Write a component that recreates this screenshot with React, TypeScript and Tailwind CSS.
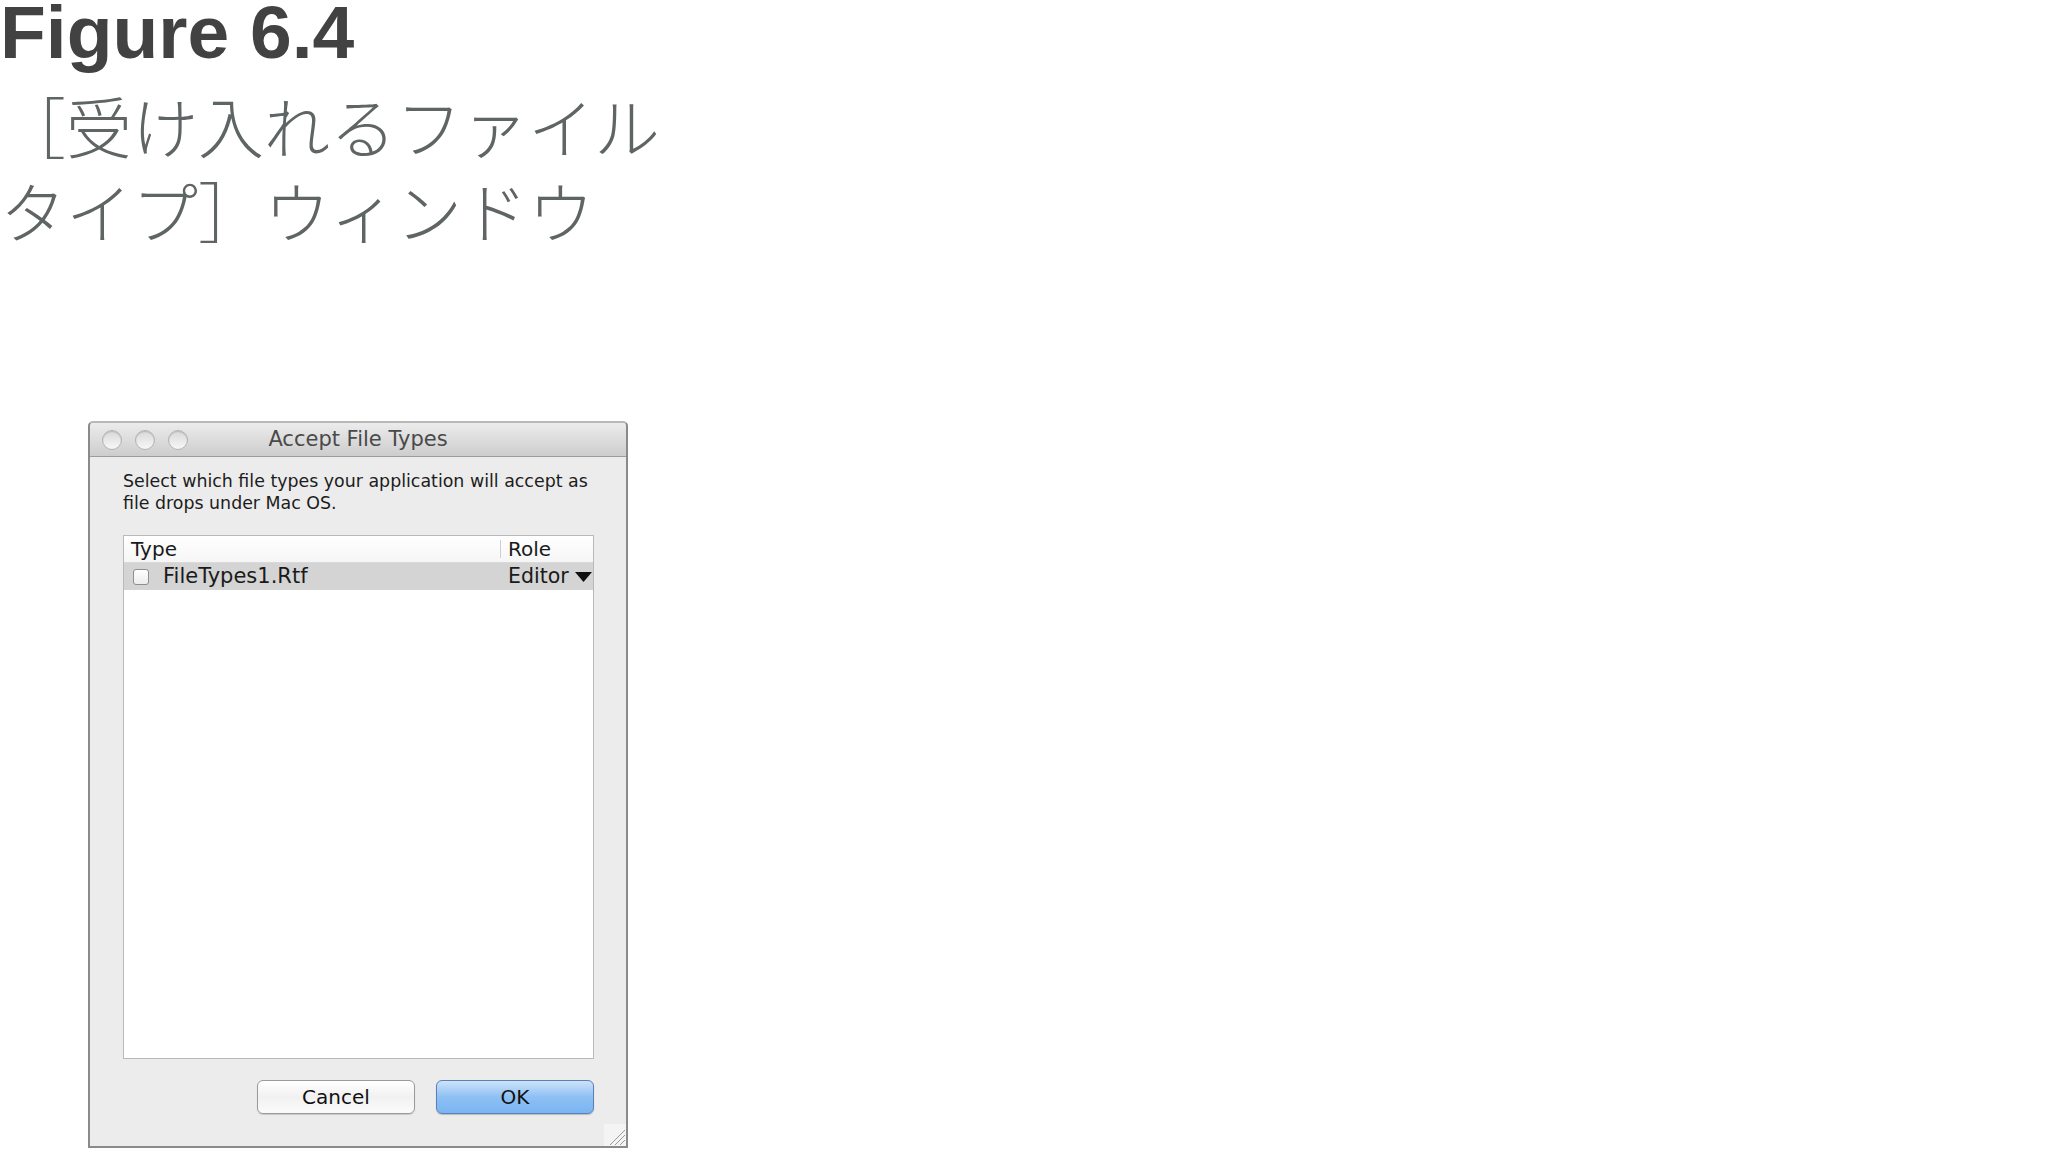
import React from "react";

const TrafficLight = () => (
  <span className="block w-[20px] h-[20px] rounded-full border border-[#b3b3b3] bg-gradient-to-b from-[#d9d9d9] to-[#f7f7f7] shadow-[inset_0_1px_1px_rgba(0,0,0,0.15)]" />
);

const AcceptFileTypes = () => {
  return (
    <div className="relative ml-[88px] mt-[169px] w-[540px] h-[727px] flex flex-col border-2 border-[#8a8a8a] border-t-[#b8b8b8] rounded-t-[5px] bg-[#ececec] font-['DejaVu_Sans',sans-serif]">
      <div className="h-[34px] grid grid-cols-[1fr_auto_1fr] items-center border-b border-[#9c9c9c] rounded-t-[4px] bg-gradient-to-b from-[#ececec] to-[#cdcdcd]">
        <div className="flex items-center gap-[13px] pl-[12px]">
          <TrafficLight />
          <TrafficLight />
          <TrafficLight />
        </div>
        <div className="text-[21px] text-[#4a4a4a] leading-none">Accept File Types</div>
        <div />
      </div>

      <div className="flex-1 flex flex-col pl-[33px] pr-[32px] pt-[13px]">
        <p className="text-[17.4px] leading-[22px] text-[#1c1c1c] whitespace-nowrap">
          Select which file types your application will accept as
          <br />
          file drops under Mac OS.
        </p>

        <div className="mt-[21px] h-[524px] border border-[#b9b9b9] bg-white flex flex-col">
          <div className="h-[27px] flex items-center border-b border-[#dadada] bg-gradient-to-b from-white to-[#f6f6f6] text-[20px] leading-none text-[#1a1a1a]">
            <div className="w-[376px] pl-[7px]">Type</div>
            <div className="h-[18px] border-l border-[#cfcfcf]" />
            <div className="pl-[7px]">Role</div>
          </div>
          <div className="h-[27px] flex items-center bg-[#d4d4d4] text-[21px] leading-none text-[#1a1a1a]">
            <div className="w-[376px] flex items-center pl-[9px]">
              <span className="block w-[16px] h-[16px] rounded-[3px] border border-[#8e8e8e] bg-gradient-to-b from-white to-[#ececec]" />
              <span className="ml-[14px]">FileTypes1.Rtf</span>
            </div>
            <div className="flex items-center pl-[8px]">
              <span className="text-[20.5px]">Editor</span>
              <svg width="17" height="10" viewBox="0 0 17 10" className="ml-[6px]">
                <polygon points="0,0 17,0 8.5,10" fill="#111" />
              </svg>
            </div>
          </div>
        </div>

        <div className="mt-[21px] flex justify-end gap-[21px]">
          <button className="w-[158px] h-[34px] rounded-[6px] border border-[#9a9a9a] bg-gradient-to-b from-white via-[#f1f1f1] to-[#fbfbfb] shadow-[0_1px_1px_rgba(0,0,0,0.15)] text-[20px] leading-none text-[#111]">
            Cancel
          </button>
          <button className="w-[158px] h-[34px] rounded-[6px] border border-[#5b7fb9] bg-gradient-to-b from-[#cde3fa] via-[#8ec0f3] to-[#79b5f3] shadow-[0_1px_1px_rgba(0,0,0,0.2)] text-[20px] leading-none text-[#111]">
            OK
          </button>
        </div>
      </div>

      <svg width="22" height="22" viewBox="0 0 22 22" className="absolute right-0 bottom-0">
        <rect width="22" height="22" fill="#f4f4f4" />
        <line x1="6" y1="21" x2="21" y2="6" stroke="#9a9a9a" strokeWidth="1" />
        <line x1="11" y1="21" x2="21" y2="11" stroke="#9a9a9a" strokeWidth="1" />
        <line x1="16" y1="21" x2="21" y2="16" stroke="#9a9a9a" strokeWidth="1" />
      </svg>
    </div>
  );
};

export default function App() {
  return (
    <div className="w-[2048px] h-[1149px] overflow-hidden bg-white flex flex-col">
      <h1 className="-mt-[3px] text-[75px] font-bold leading-[70px] text-[#424242] font-['Liberation_Sans',sans-serif] whitespace-nowrap">
        Figure 6.4
      </h1>
      <p className="mt-[15px] text-[66px] leading-[85px] text-[#5f6464] font-light font-['Noto_Sans_CJK_JP',sans-serif] whitespace-nowrap">
        ［受け入れるファイル
        <br />
        タイプ］ウィンドウ
      </p>
      <AcceptFileTypes />
    </div>
  );
}
